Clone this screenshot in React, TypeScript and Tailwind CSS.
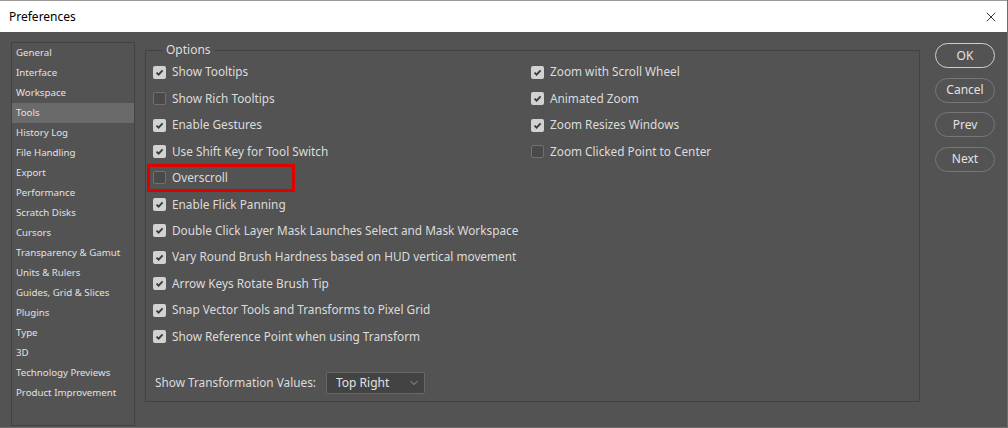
import { X, ChevronDown } from 'lucide-react';

const categories = [
  'General',
  'Interface',
  'Workspace',
  'Tools',
  'History Log',
  'File Handling',
  'Export',
  'Performance',
  'Scratch Disks',
  'Cursors',
  'Transparency & Gamut',
  'Units & Rulers',
  'Guides, Grid & Slices',
  'Plugins',
  'Type',
  '3D',
  'Technology Previews',
  'Product Improvement',
];

const leftOptions = [
  { label: 'Show Tooltips', checked: true },
  { label: 'Show Rich Tooltips', checked: false },
  { label: 'Enable Gestures', checked: true },
  { label: 'Use Shift Key for Tool Switch', checked: true },
  { label: 'Overscroll', checked: false, highlight: true },
  { label: 'Enable Flick Panning', checked: true },
  { label: 'Double Click Layer Mask Launches Select and Mask Workspace', checked: true },
  { label: 'Vary Round Brush Hardness based on HUD vertical movement', checked: true },
  { label: 'Arrow Keys Rotate Brush Tip', checked: true },
  { label: 'Snap Vector Tools and Transforms to Pixel Grid', checked: true },
  { label: 'Show Reference Point when using Transform', checked: true },
];

const rightOptions = [
  { label: 'Zoom with Scroll Wheel', checked: true },
  { label: 'Animated Zoom', checked: true },
  { label: 'Zoom Resizes Windows', checked: true },
  { label: 'Zoom Clicked Point to Center', checked: false },
];

function Checkbox({ checked }: { checked: boolean }) {
  if (checked) {
    return (
      <span className="flex w-[13px] h-[13px] shrink-0 items-center justify-center rounded-[2px] bg-[#d2d2d2]">
        <svg width="9" height="9" viewBox="0 0 9 9">
          <path d="M1.5 4.6 L3.6 6.7 L7.6 2.4" fill="none" stroke="#3a3a3a" strokeWidth="1.8" />
        </svg>
      </span>
    );
  }
  return <span className="block w-[13px] h-[13px] shrink-0 rounded-[2px] border border-[#707070] bg-[#4a4a4a]" />;
}

function OptionRow({ label, checked, highlight }: { label: string; checked: boolean; highlight?: boolean }) {
  return (
    <div className="flex h-[26.45px] items-center">
      <div
        className={
          highlight
            ? 'flex items-center gap-[6px] h-[28px] w-[148px] -ml-[6px] pl-[3px] border-[3px] border-[#e00000]'
            : 'flex items-center gap-[6px]'
        }
      >
        <Checkbox checked={checked} />
        <span className="whitespace-nowrap text-[11.8px] text-[#dcdcdc]">{label}</span>
      </div>
    </div>
  );
}

function DialogButton({ label, primary }: { label: string; primary?: boolean }) {
  return (
    <button
      className={
        'h-[25px] w-[60px] rounded-full border text-[12px] text-[#e2e2e2] ' +
        (primary ? 'border-[#cfcfcf]' : 'border-[#777777]')
      }
    >
      {label}
    </button>
  );
}

export default function App() {
  return (
    <div
      className="flex h-[428px] w-[1008px] flex-col overflow-hidden border-r border-b border-[#6e6e6e] bg-[#535353]"
      style={{ fontFamily: '"Noto Sans", "Open Sans", sans-serif' }}
    >
      <div className="flex h-[32px] shrink-0 items-center justify-between border-t border-[#9a9a9a] bg-white pl-[9px] pr-[8px]">
        <span className="text-[12px] text-black">Preferences</span>
        <X className="h-[16px] w-[16px] text-black" strokeWidth={1.2} />
      </div>

      <div className="flex flex-1 pl-[11px] pt-[10px]">
        <div className="w-[124px] h-[384px] shrink-0 border border-[#424242]">
          {categories.map((c) => (
            <div
              key={c}
              className={
                'flex h-[20px] items-center pl-[4px] text-[9.7px] text-[#e2e2e2] ' +
                (c === 'Tools' ? 'bg-[#6a6a6a]' : '')
              }
            >
              {c}
            </div>
          ))}
        </div>

        <fieldset className="ml-[10px] h-[360px] w-[775px] shrink-0 border border-[#424242] px-[7px]">
          <legend className="ml-[9px] px-[4px] text-[12px] leading-[16px] text-[#dcdcdc]">Options</legend>
          <div className="flex pt-[1px]">
            <div className="w-[378px] shrink-0">
              {leftOptions.map((o) => (
                <OptionRow key={o.label} {...o} />
              ))}
            </div>
            <div>
              {rightOptions.map((o) => (
                <OptionRow key={o.label} {...o} />
              ))}
            </div>
          </div>
          <div className="mt-[22px] flex items-center pl-[2px]">
            <span className="w-[171px] text-[11.8px] text-[#dcdcdc]">Show Transformation Values:</span>
            <div className="flex h-[22px] w-[99px] items-center justify-between rounded-[2px] border border-[#686868] bg-[#434343] pl-[9px] pr-[4px]">
              <span className="text-[12px] text-[#e2e2e2]">Top Right</span>
              <ChevronDown className="h-[12px] w-[12px] text-[#bdbdbd]" strokeWidth={1.5} />
            </div>
          </div>
        </fieldset>

        <div className="ml-[15px] flex flex-col gap-[9.5px] pt-[1px]">
          <DialogButton label="OK" primary />
          <DialogButton label="Cancel" />
          <DialogButton label="Prev" />
          <DialogButton label="Next" />
        </div>
      </div>
    </div>
  );
}
